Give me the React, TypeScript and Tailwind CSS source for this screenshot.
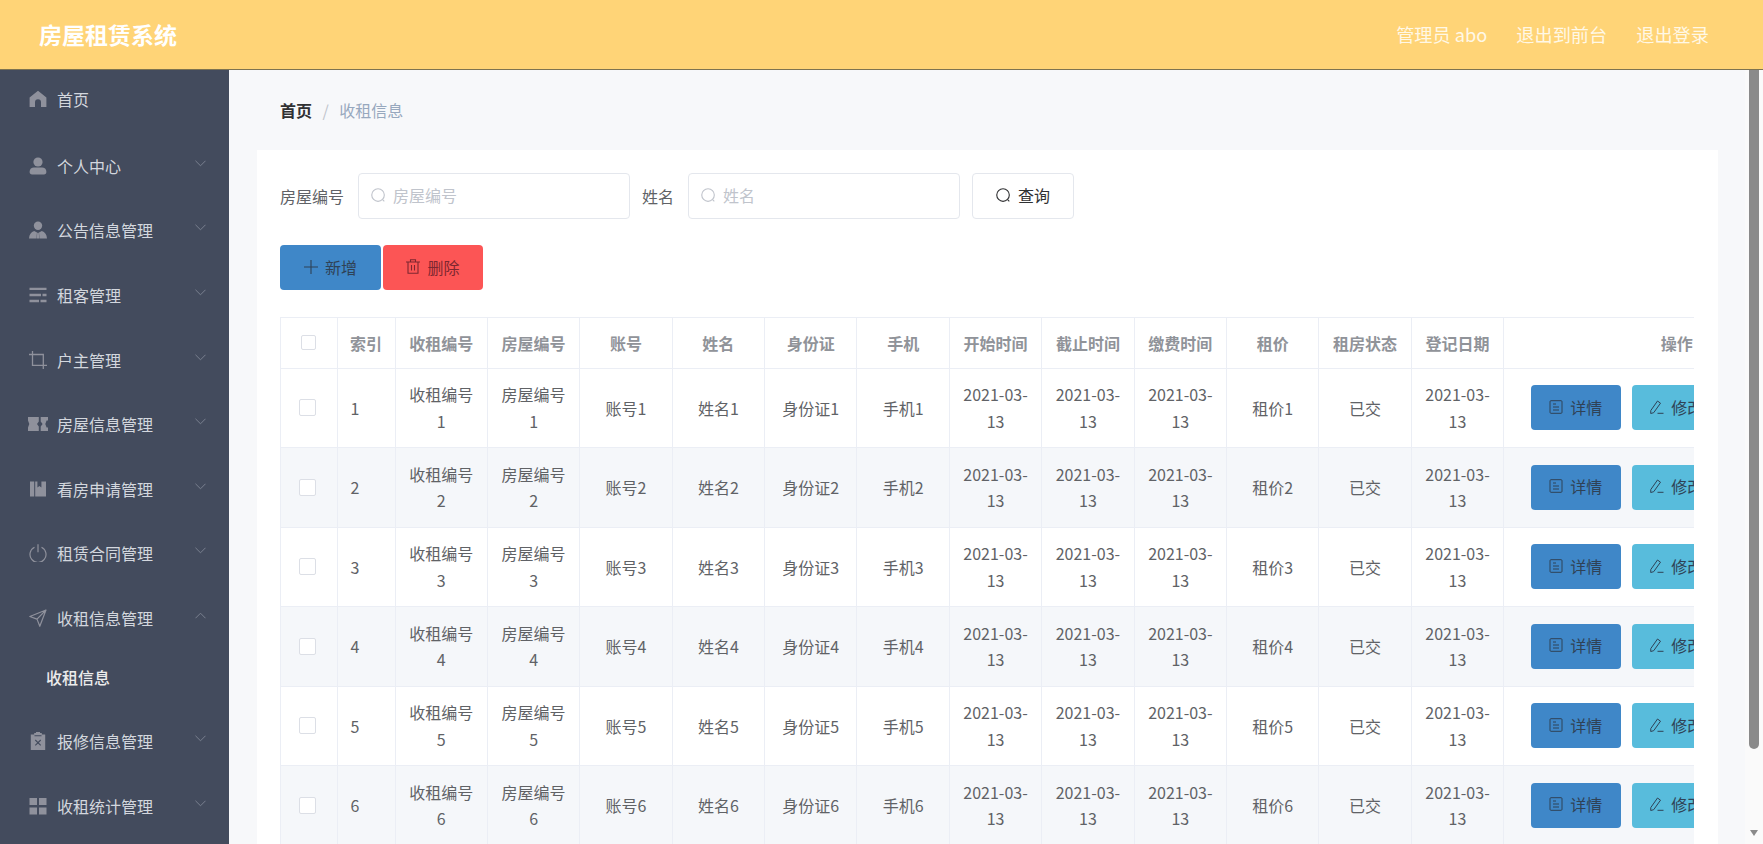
import React from "react";

const ic = "w-[18px] h-[18px] shrink-0 text-[#8f919c]";

const icons: Record<string, React.ReactNode> = {
  home: (
    <svg viewBox="0 0 18 18" className={ic} fill="currentColor">
      <path d="M9 .8 17.4 7.6V17H12v-4.700a3 3 0 0 0-6 0V17H.6V7.6z" />
    </svg>
  ),
  user: (
    <svg viewBox="0 0 18 18" className={ic} fill="currentColor">
      <circle cx="9" cy="5" r="4.6" />
      <path d="M.6 15c0-3 2-4.400 4.400-4.400h8c2.400 0 4.400 1.400 4.400 4.400 0 1.600-1 2.400-2.400 2.400H3C1.600 17.400.6 16.600.6 15z" />
    </svg>
  ),
  custom: (
    <svg viewBox="0 0 18 18" className={ic} fill="currentColor">
      <circle cx="9" cy="4.800" r="4.200" />
      <path d="M5.200 10 8 11.500 7.500 17.500H0C.2 13.500 2 11 5.200 10zM12.800 10 10 11.500 10.500 17.500H18C17.800 13.500 16 11 12.800 10zM8.200 11.800h1.600l.4 5.700H7.800z" />
    </svg>
  ),
  operation: (
    <svg viewBox="0 0 18 18" className={ic} fill="currentColor">
      <path d="M.5 1.800h17v2.300H.5zM.5 7.800h11.500v2.400H.5zM13.500 7.800h4v2.400h-4zM.5 13.800h9.500v2.400H.5zM11.500 13.800h6v2.400h-6z" />
    </svg>
  ),
  crop: (
    <svg viewBox="0 0 18 18" className={ic} fill="none" stroke="currentColor" strokeWidth="1.300">
      <path d="M3.500 0v14.300H18M0 3.500h14.300V18" />
    </svg>
  ),
  ticket: (
    <svg viewBox="0 0 20 18" className="w-[20px] h-[18px] shrink-0 text-[#8f919c] -ml-px -mr-px" fill="currentColor">
      <path d="M0 2h10.800v4.400L9 9l1.800 2.600V16H0v-3.500L1.300 9 0 5.500zM12.700 2H20v3.500h-1.400L17.300 9l1.300 3.500H20V16h-7.300v-4.400L14.600 9l-1.900-2.600z" />
    </svg>
  ),
  management: (
    <svg viewBox="0 0 18 18" className={ic} fill="currentColor">
      <path d="M1 1.500h4.200v15H1zM6.200 1.500h2.200v6l2-1.500 2 1.500v-6H17v15H6.200z" />
    </svg>
  ),
  power: (
    <svg viewBox="0 0 18 18" className={ic} fill="none" stroke="currentColor" strokeWidth="1.200">
      <path d="M5.500 3.300a8 8 0 1 0 7 0M9 .3v8" />
    </svg>
  ),
  position: (
    <svg viewBox="0 0 18 18" className={ic} fill="none" stroke="currentColor" strokeWidth="1.200" strokeLinejoin="round">
      <path d="M17 1 .8 7.500l7.200 2.600 2.800 7.200zM8 10.100 17 1" />
    </svg>
  ),
  release: (
    <svg viewBox="0 0 18 18" className={ic}>
      <path fill="currentColor" d="M1.800 2.600h3.400V1H7V0h4v1h1.800v1.600h3.400V18H1.800z" />
      <path fill="none" stroke="#434b5d" strokeWidth="1.100" d="m6.300 8 5.400 5.400M11.700 8l-5.400 5.400M5.500 3.800h7" />
    </svg>
  ),
  grid: (
    <svg viewBox="0 0 18 18" className={ic} fill="currentColor">
      <rect x="0.500" y="1" width="7.500" height="7" />
      <rect x="10" y="1" width="7.500" height="7" />
      <rect x="0.500" y="10.500" width="7.500" height="7" />
      <rect x="10" y="10.500" width="7.500" height="7" />
    </svg>
  ),
};

const Chevron = ({ up }: { up?: boolean }) => (
  <svg viewBox="0 0 12 7" className="w-[11px] h-[7px] mb-[5px] text-[#7f8594]" fill="none" stroke="currentColor" strokeWidth="1">
    <path d={up ? "M.5 6.500 6 1l5.500 5.500" : "M.5.500 6 6 11.500.500"} />
  </svg>
);

const SearchIcon = ({ className }: { className: string }) => (
  <svg viewBox="0 0 16 16" className={className} fill="none" stroke="currentColor" strokeWidth="1.200">
    <circle cx="7.500" cy="7.500" r="6.700" />
    <path d="m12.400 12.400 1.800 1.800" />
  </svg>
);

const DocIcon = () => (
  <svg viewBox="0 0 14 14" className="w-[14px] h-[14px]" fill="none" stroke="currentColor" strokeWidth="1">
    <rect x="1" y="0.700" width="12" height="12.600" rx="1" />
    <path d="M4 4h3M4 7h6M4 10h6" />
  </svg>
);

const EditIcon = () => (
  <svg viewBox="0 0 14 14" className="w-[14px] h-[14px]" fill="none" stroke="currentColor" strokeWidth="1">
    <path d="M.8 10.500 7.500 1l3 2.200-6.800 9.500-3 .8zM7.500 13.300h6" />
  </svg>
);

const TrashIcon = () => (
  <svg viewBox="0 0 14 15" className="w-[14px] h-[15px]" fill="none" stroke="currentColor" strokeWidth="1.100">
    <path d="M0 3h14M4.500 3V.7h5V3M2 3v11.300h10V3M5.500 6v5.500M8.500 6v5.500" />
  </svg>
);

const menu = [
  { t: "个人中心", i: "user" },
  { t: "公告信息管理", i: "custom" },
  { t: "租客管理", i: "operation" },
  { t: "户主管理", i: "crop" },
  { t: "房屋信息管理", i: "ticket" },
  { t: "看房申请管理", i: "management" },
  { t: "租赁合同管理", i: "power" },
];

const heads = ["收租编号", "房屋编号", "账号", "姓名", "身份证", "手机", "开始时间", "截止时间", "缴费时间", "租价", "租房状态", "登记日期"];
const rows = [1, 2, 3, 4, 5, 6, 7];

const th = "border-r border-b border-[#ebeef5] font-bold text-[#909399] text-center h-[50px] p-0";
const td = "border-r border-b border-[#ebeef5] text-center text-[#606266] px-[13px] py-0 h-[79.5px] leading-[26.4px]";

const ActionBtn = ({ bg, icon, label }: { bg: string; icon: React.ReactNode; label: string }) => (
  <button className={`${bg} w-[90px] h-[45px] shrink-0 rounded-[4px] flex items-center justify-center gap-[7px] pb-[2px] text-[#2f4256]`}>
    {icon}
    <span>{label}</span>
  </button>
);

const SearchBox = ({ placeholder }: { placeholder: string }) => (
  <div className="w-[272px] h-[46px] rounded-[4px] border border-[#e4e7ed] bg-white flex items-center pl-[12px] gap-[7px] pb-[2px]">
    <SearchIcon className="w-[15px] h-[15px] text-[#c0c4cc] shrink-0" />
    <input placeholder={placeholder} className="flex-1 min-w-0 outline-none text-[16px] placeholder:text-[#c0c4cc]" />
  </div>
);

function SideItem({ t, i, up, cls }: { t: string; i: string; up?: boolean; cls?: string }) {
  return (
    <div className={`flex items-center pl-[29px] pr-[23px] text-[#d3d7de] ${cls ?? "h-[64.6px]"}`}>
      {icons[i]}
      <span className="ml-[10px] flex-1">{t}</span>
      {t !== "首页" && <Chevron up={up} />}
    </div>
  );
}

export default function App() {
  return (
    <div className="relative h-screen overflow-hidden flex flex-col text-[16px] font-['Noto_Sans_CJK_SC','Noto_Sans',sans-serif]">
      <header className="h-[70px] shrink-0 bg-[#ffd477] border-b border-[#7d7350] flex items-center pl-[39px] pr-[54px]">
        <h1 className="text-[23px] font-bold text-white flex-1">房屋租赁系统</h1>
        <div className="flex gap-[29px] text-[18.2px] text-[#fff8e6]">
          <span>管理员 abo</span>
          <span>退出到前台</span>
          <span>退出登录</span>
        </div>
      </header>
      <div className="flex flex-1 min-h-0">
        <aside className="w-[229px] shrink-0 bg-[#434b5d] overflow-hidden">
          <SideItem t="首页" i="home" cls="h-[63.6px] pb-[5px]" />
          {menu.map((m) => (
            <SideItem key={m.t} t={m.t} i={m.i} />
          ))}
          <SideItem t="收租信息管理" i="position" up />
          <div className="h-[58.4px] pl-[46px] pb-[5px] flex items-center text-[#ececec] font-medium">收租信息</div>
          <SideItem t="报修信息管理" i="release" />
          <SideItem t="收租统计管理" i="grid" />
        </aside>
        <main className="flex-1 min-w-0 bg-[#f7f8fa] overflow-hidden pl-[28px] pr-[45px]">
          <div className="h-[80px] pl-[23px] flex items-center">
            <span className="font-bold text-[#303133]">首页</span>
            <span className="mx-[10.5px] text-[#c0c4cc]">/</span>
            <span className="text-[#97a8be]">收租信息</span>
          </div>
          <section className="bg-white pt-[23px] pl-[23px] pr-[24px] h-[800px]">
            <div className="flex items-center h-[46px]">
              <label className="text-[#606266] mr-[14px]">房屋编号</label>
              <SearchBox placeholder="房屋编号" />
              <label className="text-[#606266] ml-[12px] mr-[14px]">姓名</label>
              <SearchBox placeholder="姓名" />
              <button className="ml-[12px] w-[102px] h-[46px] rounded-[4px] border border-[#e4e7ed] flex items-center justify-center gap-[7px] pb-[2px] text-[#303133]">
                <SearchIcon className="w-[15px] h-[15px]" />
                <span>查询</span>
              </button>
            </div>
            <div className="flex gap-[2px] mt-[26px]">
              <button className="w-[101px] h-[45px] rounded-[4px] bg-[#3f87c8] flex items-center justify-center gap-[7px] pb-[2px] text-[#2f4256]">
                <svg viewBox="0 0 14 14" className="w-[14px] h-[14px]" fill="none" stroke="currentColor" strokeWidth="1.100">
                  <path d="M7 0v14M0 7h14" />
                </svg>
                <span>新增</span>
              </button>
              <button className="w-[100px] h-[45px] rounded-[4px] bg-[#fc5555] flex items-center justify-center gap-[7px] pb-[2px] text-[#7d2730]">
                <TrashIcon />
                <span>删除</span>
              </button>
            </div>
            <div className="mt-[27px] w-[1414px] overflow-hidden border-l border-t border-[#ebeef5]">
              <table className="table-fixed border-collapse w-[1569px]">
                <colgroup>
                  <col className="w-[56px]" />
                  <col className="w-[58px]" />
                  {heads.map((h) => (
                    <col key={h} className="w-[92.4px]" />
                  ))}
                  <col className="w-[346px]" />
                </colgroup>
                <thead>
                  <tr>
                    <th className={th}>
                      <span className="block w-[15px] h-[15px] mx-auto border border-[#dcdfe6] rounded-[2px] bg-white" />
                    </th>
                    <th className={th}>索引</th>
                    {heads.map((h) => (
                      <th key={h} className={th}>{h}</th>
                    ))}
                    <th className={th}>操作</th>
                  </tr>
                </thead>
                <tbody>
                  {rows.map((n) => (
                    <tr key={n} className={n % 2 === 0 ? "bg-[#f5f7fa]" : "bg-white"}>
                      <td className={td + " !px-[18px]"}>
                        <span className="block w-[17px] h-[17px] border border-[#dcdfe6] rounded-[2px] bg-white" />
                      </td>
                      <td className={td + " !text-left"}>{n}</td>
                      <td className={td}>收租编号{n}</td>
                      <td className={td}>房屋编号{n}</td>
                      <td className={td}>账号{n}</td>
                      <td className={td}>姓名{n}</td>
                      <td className={td}>身份证{n}</td>
                      <td className={td}>手机{n}</td>
                      <td className={td}>2021-03-13</td>
                      <td className={td}>2021-03-13</td>
                      <td className={td}>2021-03-13</td>
                      <td className={td}>租价{n}</td>
                      <td className={td}>已交</td>
                      <td className={td}>2021-03-13</td>
                      <td className={td + " !px-0"}>
                        <div className="flex gap-[11px] justify-center">
                          <ActionBtn bg="bg-[#3f87c8]" icon={<DocIcon />} label="详情" />
                          <ActionBtn bg="bg-[#58bcdc]" icon={<EditIcon />} label="修改" />
                          <ActionBtn bg="bg-[#fc5555]" icon={<TrashIcon />} label="删除" />
                        </div>
                      </td>
                    </tr>
                  ))}
                </tbody>
              </table>
            </div>
          </section>
        </main>
      </div>
      <div className="absolute right-0 top-[70px] bottom-0 w-[18px] bg-[#fafafa] pl-[4px] pr-[4px]">
        <div className="h-[679px] w-[10px] bg-[#8a8a8a] rounded-b-[5px]" />
        <div className="mt-[81px] mx-auto w-0 h-0 border-x-[4px] border-x-transparent border-t-[6px] border-t-[#8a8a8a]" />
      </div>
    </div>
  );
}
